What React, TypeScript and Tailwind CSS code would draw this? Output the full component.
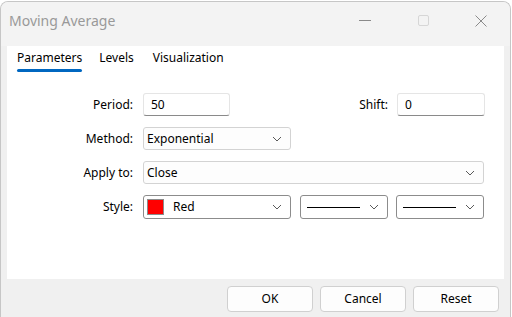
import { ReactNode } from 'react';

const font = { fontFamily: '"Noto Sans", "Open Sans", sans-serif' };

function Chevron() {
  return (
    <svg width="10" height="6" viewBox="0 0 10 6" className="shrink-0">
      <path d="M1 1 L5 5 L9 1" fill="none" stroke="#5a5a5a" strokeWidth="1" />
    </svg>
  );
}

function TextBox({ value, width }: { value: string; width: string }) {
  return (
    <div
      className={`${width} h-[23px] flex items-center pl-[7px] bg-white border border-[#e5e5e5] border-b-[#8a8a8a] rounded-[3px]`}
    >
      {value}
    </div>
  );
}

function Combo({ children, width, dark }: { children: ReactNode; width: string; dark?: boolean }) {
  return (
    <div
      className={`${width} ${
        dark ? 'h-[24px] border-[#8c8c8c] bg-white' : 'h-[23px] border-[#d3d3d3] bg-[#fdfdfd]'
      } flex items-center justify-between pl-[3px] pr-[8px] border rounded-[3px]`}
    >
      <div className="flex items-center">{children}</div>
      <Chevron />
    </div>
  );
}

function Label({ children, width }: { children: ReactNode; width: string }) {
  return <div className={`${width} text-right`}>{children}</div>;
}

function Button({ children }: { children: ReactNode }) {
  return (
    <button className="w-[86px] h-[26px] bg-[#fdfdfd] border border-[#d0d0d0] rounded-[4px] text-[12px] text-black">
      {children}
    </button>
  );
}

export default function App() {
  return (
    <div className="w-[512px] h-[317px] bg-white overflow-hidden" style={font}>
      <div className="w-[511px] h-[317px] mt-[1px] border border-b-0 border-[#c6c6c6] rounded-t-[8px] bg-[#f0f0f0] flex flex-col overflow-hidden">
        {/* Title bar */}
        <div className="h-[44px] bg-[#f3f3f3] flex items-center justify-between pl-[8px]">
          <span className="text-[14px] text-[#999999] -mt-[7px]">Moving Average</span>
          <div className="flex items-center -mt-[7px]">
            <div className="w-[58px] flex justify-center">
              <div className="w-[12px] h-[1px] bg-[#8a8a8a]" />
            </div>
            <div className="w-[58px] flex justify-center">
              <div className="w-[11px] h-[11px] border border-[#d6d6d6] rounded-[2px]" />
            </div>
            <div className="w-[58px] flex justify-center">
              <svg width="12" height="12" viewBox="0 0 12 12">
                <path d="M0.5 0.5 L11.5 11.5 M11.5 0.5 L0.5 11.5" stroke="#8a8a8a" strokeWidth="1" />
              </svg>
            </div>
          </div>
        </div>

        {/* Body */}
        <div className="flex-1 flex flex-col px-[6px]">
          <div className="h-[233px] bg-white flex flex-col text-[12px] text-black">
            {/* Tabs */}
            <div className="flex items-start pl-[10px] pt-[3px] h-[25px]">
              <div className="flex flex-col">
                <span>Parameters</span>
                <div className="h-[3px] bg-[#0067c0] rounded-full mt-[2px]" />
              </div>
              <span className="ml-[17px]">Levels</span>
              <span className="ml-[19px]">Visualization</span>
            </div>

            {/* Form */}
            <div className="flex flex-col gap-[11px] mt-[22px]">
              <div className="flex items-center">
                <Label width="w-[126px]">Period:</Label>
                <div className="ml-[10px]">
                  <TextBox value="50" width="w-[87px]" />
                </div>
                <Label width="w-[158px]">Shift:</Label>
                <div className="ml-[9px]">
                  <TextBox value="0" width="w-[88px]" />
                </div>
              </div>

              <div className="flex items-center">
                <Label width="w-[126px]">Method:</Label>
                <div className="ml-[10px]">
                  <Combo width="w-[148px]">Exponential</Combo>
                </div>
              </div>

              <div className="flex items-center">
                <Label width="w-[126px]">Apply to:</Label>
                <div className="ml-[10px]">
                  <Combo width="w-[341px]">Close</Combo>
                </div>
              </div>

              <div className="flex items-center">
                <Label width="w-[126px]">Style:</Label>
                <div className="ml-[10px] flex items-center gap-[9px]">
                  <Combo width="w-[148px]" dark>
                    <div className="w-[17px] h-[16px] bg-[#ff0000] border border-[#8c8c8c]" />
                    <span className="ml-[9px]">Red</span>
                  </Combo>
                  <Combo width="w-[88px]" dark>
                    <div className="w-[53px] h-[1px] bg-black ml-[3px]" />
                  </Combo>
                  <div className="-ml-[1px]">
                    <Combo width="w-[88px]" dark>
                      <div className="w-[53px] h-[1px] bg-black ml-[3px]" />
                    </Combo>
                  </div>
                </div>
              </div>
            </div>
          </div>

          {/* Buttons */}
          <div className="flex justify-end gap-[7px] mt-[7px] pr-[5px]">
            <Button>OK</Button>
            <Button>Cancel</Button>
            <Button>Reset</Button>
          </div>
        </div>
      </div>
    </div>
  );
}
